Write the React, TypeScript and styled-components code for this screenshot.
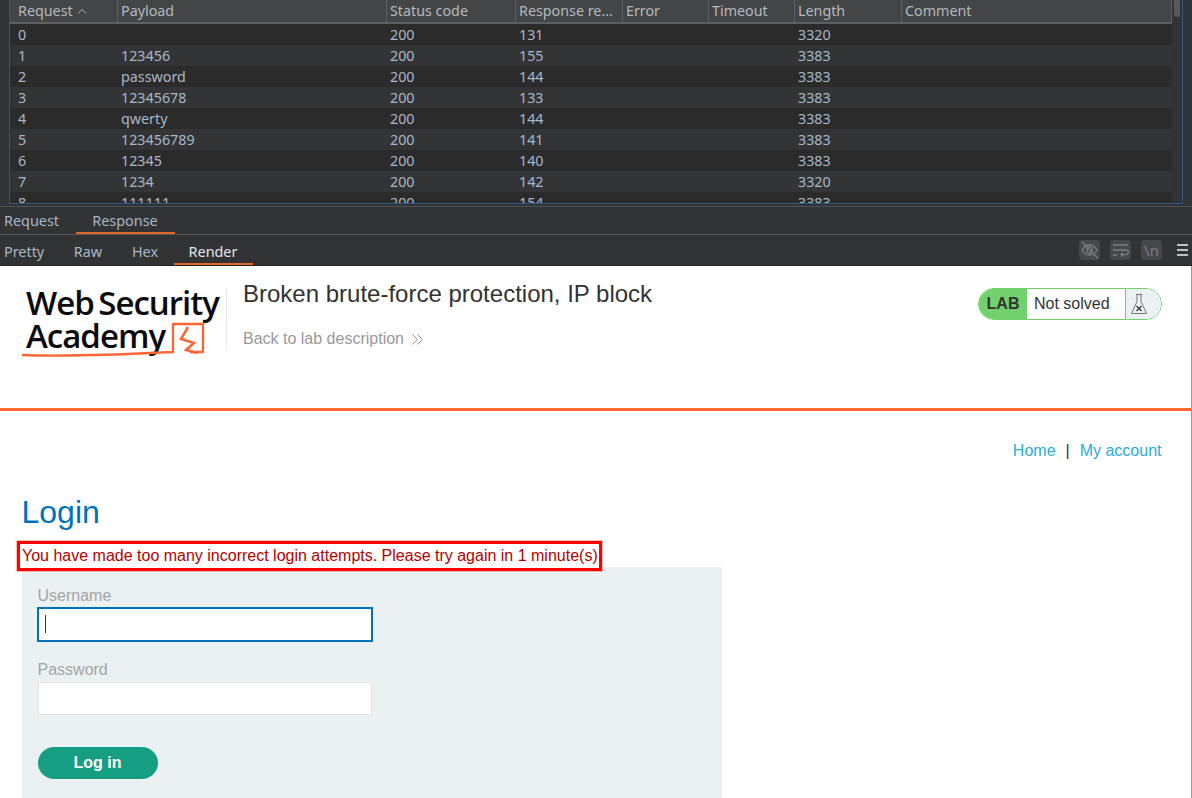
import React from 'react';
import styled, { createGlobalStyle } from 'styled-components';

const Global = createGlobalStyle`
  html, body { margin: 0; padding: 0; background: #fff; }
  body { width: 1192px; height: 798px; overflow: hidden; }
  * { box-sizing: border-box; }
`;

const COLS = '108px 269px 129px 107px 86px 86px 107px 1fr';

const Page = styled.div`
  width: 1192px;
  height: 798px;
  display: flex;
  flex-direction: column;
  overflow: hidden;
  font-family: "Noto Sans", sans-serif;
`;

const Burp = styled.div`
  background: #313335;
  flex: none;
`;

const TableFrame = styled.div`
  height: 207px;
  padding: 0 9px 0 9px;
  border-bottom: 1px solid #4f5254;
`;

const TableBox = styled.div`
  height: 204px;
  display: flex;
  border-left: 1px solid #2b5a85;
  border-right: 1px solid #2b5a85;
  border-bottom: 1px solid #2b5a85;
  overflow: hidden;
`;

const Grid = styled.div`
  width: 1162px;
  flex: none;
  overflow: hidden;
`;

const HeaderRow = styled.div`
  display: grid;
  grid-template-columns: ${COLS};
  height: 24px;
  background: #434547;
  border-bottom: 2px solid #5e6062;
`;

const HeaderCell = styled.div`
  padding: 0 0 1px 3px;
  font-size: 14.3px;
  line-height: 20px;
  color: #b4b9bd;
  border-right: 1px solid #5e6062;
  white-space: nowrap;
  display: flex;
  align-items: center;
  height: 22px;
  gap: 4px;
  &:first-child { padding-left: 8px; }
`;

const Row = styled.div<{ $odd: boolean }>`
  display: grid;
  grid-template-columns: ${COLS};
  height: 21px;
  background: ${(p) => (p.$odd ? '#323436' : '#2b2b2b')};
`;

const Cell = styled.div`
  padding: 0 0 0 3px;
  font-size: 14.3px;
  line-height: 21px;
  color: #a9b7c6;
  white-space: nowrap;
  &:first-child { padding-left: 8px; }
`;

const Scrollbar = styled.div`
  flex: 1;
  display: flex;
  justify-content: center;
`;

const Thumb = styled.div`
  width: 6px;
  height: 17px;
  background: #56595b;
  border-radius: 0 0 3px 3px;
`;

const TabRow = styled.div`
  height: 28px;
  display: flex;
  align-items: stretch;
  border-bottom: 1px solid #55585a;
`;

const ViewRow = styled.div`
  height: 31px;
  display: flex;
  align-items: stretch;
  background: #313335;
  border-bottom: 1px solid #222;
`;

const Tab = styled.div<{ $active?: boolean; $bright?: boolean; $w: number; $left?: boolean; $lh: number }>`
  width: ${(p) => p.$w}px;
  text-align: ${(p) => (p.$left ? 'left' : 'center')};
  padding-left: ${(p) => (p.$left ? 4 : 0)}px;
  padding-right: ${(p) => (p.$left ? 0 : 1)}px;
  font-size: 14.4px;
  line-height: ${(p) => p.$lh}px;
  color: ${(p) => (p.$bright ? '#e4e6e8' : '#a9b7c6')};
  border-bottom: 2px solid ${(p) => (p.$active ? '#e2672f' : 'transparent')};
`;

const ViewTools = styled.div`
  margin-left: auto;
  display: flex;
  align-items: center;
  padding-right: 4px;
  gap: 10px;
`;

const ToolBtn = styled.div`
  width: 21px;
  height: 20px;
  border-radius: 4px;
  background: #46484a;
  color: #7b7e80;
  display: flex;
  align-items: center;
  justify-content: center;
  font-size: 15px;
`;

const Burger = styled.div`
  width: 11px;
  margin-left: 5px;
  display: flex;
  flex-direction: column;
  gap: 3px;
  span { display: block; height: 2px; background: #bfc1c3; }
`;

const Lab = styled.div`
  flex: 1;
  background: #fff;
  border-right: 1px solid #9a9a9a;
  font-family: "Liberation Sans", Arial, sans-serif;
  position: relative;
  overflow: hidden;
`;

const LabHeader = styled.header`
  height: 145px;
  border-bottom: 3px solid #ff6633;
  display: flex;
  padding: 13px 29px 0 22px;
`;

const LogoBox = styled.div`
  width: 205px;
  height: 62px;
  margin: 9px 16px 0 0;
  border-right: 1px solid #e6e8ea;
  flex: none;
  position: relative;
`;

const LogoLine = styled.div<{ $top: number; $left: number }>`
  position: absolute;
  top: ${(p) => p.$top}px;
  left: ${(p) => p.$left}px;
  font-family: "Open Sans", sans-serif;
  font-weight: 600;
  font-size: 33px;
  letter-spacing: -1px;
  word-spacing: -3px;
  line-height: 36px;
  color: #0b0b0b;
  white-space: nowrap;
`;

const LogoMark = styled.svg`
  position: absolute;
  left: 0;
  top: 0;
`;

const TitleCol = styled.div`
  flex: 1;
  min-width: 0;
`;

const Title = styled.h2`
  margin: 0;
  font-size: 24px;
  font-weight: 400;
  line-height: 29px;
  color: #333332;
`;

const BackLink = styled.div`
  margin-top: 22px;
  font-size: 16px;
  line-height: 18px;
  color: #999;
  display: flex;
  align-items: center;
  gap: 7px;
`;

const Badge = styled.div`
  width: 184px;
  height: 32px;
  margin-top: 9px;
  border: 1px solid #70d16d;
  border-radius: 16px;
  display: flex;
  overflow: hidden;
  flex: none;
`;

const BadgeLabel = styled.div`
  width: 48px;
  background: #70d16d;
  font-weight: 700;
  font-size: 16px;
  line-height: 30px;
  text-align: center;
  color: #333332;
`;

const BadgeText = styled.div`
  flex: 1;
  font-size: 16px;
  line-height: 29px;
  padding-left: 7px;
  color: #333332;
`;

const BadgeIcon = styled.div`
  width: 36px;
  background: #ebf0f2;
  border-left: 1px solid #70d16d;
  display: flex;
  align-items: center;
  padding-left: 4px;
`;

const Nav = styled.nav`
  display: flex;
  justify-content: flex-end;
  align-items: center;
  padding: 31px 29.500px 0 0;
  font-size: 16px;
  line-height: 18px;
  color: #333332;
  gap: 10px;
  a { color: #29abe2; text-decoration: none; }
`;

const Body = styled.main`
  padding: 0 0 0 22px;
`;

const H1 = styled.h1`
  margin: 34px 0 0 -0.5px;
  font-size: 32px;
  font-weight: 400;
  line-height: 37px;
  color: #0071bc;
`;

const ErrorMsg = styled.div`
  margin: 10px 0 0 -5px;
  width: 585px;
  height: 30px;
  border: 3px solid #f00;
  box-shadow: 0 0 0 1px rgba(255, 0, 0, 0.25);
  padding-left: 2px;
  font-size: 16px;
  line-height: 24px;
  color: #b50000;
  white-space: nowrap;
  position: relative;
  z-index: 1;
  background: #fff;
`;

const Form = styled.form`
  margin-top: -4px;
  width: 700px;
  height: 240px;
  background: #ebf0f2;
  padding: 20px 16px 0;
`;

const Label = styled.label`
  display: block;
  margin-left: -0.5px;
  font-size: 16px;
  line-height: 18px;
  color: #a3a5a6;
`;

const Field = styled.div<{ $focus?: boolean }>`
  width: ${(p) => (p.$focus ? 336 : 334)}px;
  height: ${(p) => (p.$focus ? 35 : 33)}px;
  margin: ${(p) => (p.$focus ? '2px 0 19px -1px' : '3px 0 32px')};
  background: #fff;
  border: ${(p) => (p.$focus ? '2px solid #0071bc' : '1px solid #e6e6e6')};
  position: relative;
`;

const Caret = styled.span`
  position: absolute;
  left: 6px;
  top: 6px;
  width: 1px;
  height: 18px;
  background: #333;
`;

const Button = styled.div`
  width: 120px;
  height: 32px;
  padding-right: 1px;
  border-radius: 16px;
  background: #159e82;
  color: #fff;
  font-weight: 700;
  font-size: 16px;
  line-height: 31px;
  text-align: center;
`;

const rows: [string, string, string, string][] = [
  ['0', '', '131', '3320'],
  ['1', '123456', '155', '3383'],
  ['2', 'password', '144', '3383'],
  ['3', '12345678', '133', '3383'],
  ['4', 'qwerty', '144', '3383'],
  ['5', '123456789', '141', '3383'],
  ['6', '12345', '140', '3383'],
  ['7', '1234', '142', '3320'],
  ['8', '111111', '154', '3383'],
];

const heads = ['Payload', 'Status code', 'Response re...', 'Error', 'Timeout', 'Length', 'Comment'];

export default function App() {
  return (
    <Page>
      <Global />
      <Burp>
        <TableFrame>
          <TableBox>
            <Grid>
              <HeaderRow>
                <HeaderCell>
                  Request
                  <svg width="10" height="6" viewBox="0 0 10 6" fill="none" stroke="#b4b9bd" strokeWidth="1">
                    <path d="M1 5.500 5 1.500 9 5.500" />
                  </svg>
                </HeaderCell>
                {heads.map((h) => (
                  <HeaderCell key={h}>{h}</HeaderCell>
                ))}
              </HeaderRow>
              {rows.map((r, i) => (
                <Row key={r[0]} $odd={i % 2 === 1}>
                  <Cell>{r[0]}</Cell>
                  <Cell>{r[1]}</Cell>
                  <Cell>200</Cell>
                  <Cell>{r[2]}</Cell>
                  <Cell />
                  <Cell />
                  <Cell>{r[3]}</Cell>
                  <Cell />
                </Row>
              ))}
            </Grid>
            <Scrollbar>
              <Thumb />
            </Scrollbar>
          </TableBox>
        </TableFrame>
        <TabRow>
          <Tab $w={76} $lh={27} $left>Request</Tab>
          <Tab $w={99} $lh={27} $active>Response</Tab>
        </TabRow>
        <ViewRow>
          <Tab $w={60} $lh={33} $left>Pretty</Tab>
          <Tab $w={57} $lh={33}>Raw</Tab>
          <Tab $w={57} $lh={33}>Hex</Tab>
          <Tab $w={79} $lh={33} $active $bright>Render</Tab>
          <ViewTools>
            <ToolBtn>
              <svg width="21" height="20" viewBox="0 0 21 20" fill="none" stroke="#7b7e80" strokeWidth="1.300">
                <path d="M3 10c2-3.500 4.500-5 7.500-5s5.500 1.500 7.500 5c-2 3.500-4.500 5-7.500 5S5 13.500 3 10Z" />
                <circle cx="10.500" cy="10" r="2.800" />
                <path d="M3 1.500 19 18.500" />
              </svg>
            </ToolBtn>
            <ToolBtn>
              <svg width="17" height="14" viewBox="0 0 17 14" fill="none" stroke="#7b7e80" strokeWidth="1.300">
                <path d="M1 2h15M1 7h13a2.300 2.300 0 0 1 0 4.600H9M11 9.500l-2 2.100 2 2.100M1 12h4" />
              </svg>
            </ToolBtn>
            <ToolBtn>\n</ToolBtn>
            <Burger>
              <span />
              <span />
              <span />
            </Burger>
          </ViewTools>
        </ViewRow>
      </Burp>
      <Lab>
        <LabHeader>
          <LogoBox>
            <LogoLine $top={-3} $left={4}>Web Security</LogoLine>
            <LogoLine $top={30} $left={4}>Academy</LogoLine>
            <LogoMark width="190" height="70" viewBox="0 0 190 70" fill="none" stroke="#ff6633" strokeWidth="2.300">
              <path d="M0 67C40 68.500 110 66 151 64V36H181V64H168" />
              <path d="M166 39 159 51 172 55 164 62 175 65" strokeWidth="2.500" />
            </LogoMark>
          </LogoBox>
          <TitleCol>
            <Title>Broken brute-force protection, IP block</Title>
            <BackLink>
              Back to lab description
              <svg width="13" height="13" viewBox="0 0 13 13" fill="none" stroke="#999" strokeWidth="1">
                <path d="M1.500 1.500 6.500 6.500 1.500 11.500M6.500 1.500 11.500 6.500 6.500 11.500" />
              </svg>
            </BackLink>
          </TitleCol>
          <Badge>
            <BadgeLabel>LAB</BadgeLabel>
            <BadgeText>Not solved</BadgeText>
            <BadgeIcon>
              <svg width="18" height="24" viewBox="0 0 18 24" fill="none" stroke="#777" strokeWidth="1">
                <path d="M6 2.500h6M7 2.500v7L1.500 21.500h15L11 9.500v-7" />
                <path d="M6.500 14l5 5M11.500 14l-5 5" stroke="#333" strokeWidth="1.200" />
              </svg>
            </BadgeIcon>
          </Badge>
        </LabHeader>
        <Nav>
          <a>Home</a>
          <span>|</span>
          <a>My account</a>
        </Nav>
        <Body>
          <H1>Login</H1>
          <ErrorMsg>You have made too many incorrect login attempts. Please try again in 1 minute(s).</ErrorMsg>
          <Form>
            <Label>Username</Label>
            <Field $focus>
              <Caret />
            </Field>
            <Label>Password</Label>
            <Field />
            <Button>Log in</Button>
          </Form>
        </Body>
      </Lab>
    </Page>
  );
}
